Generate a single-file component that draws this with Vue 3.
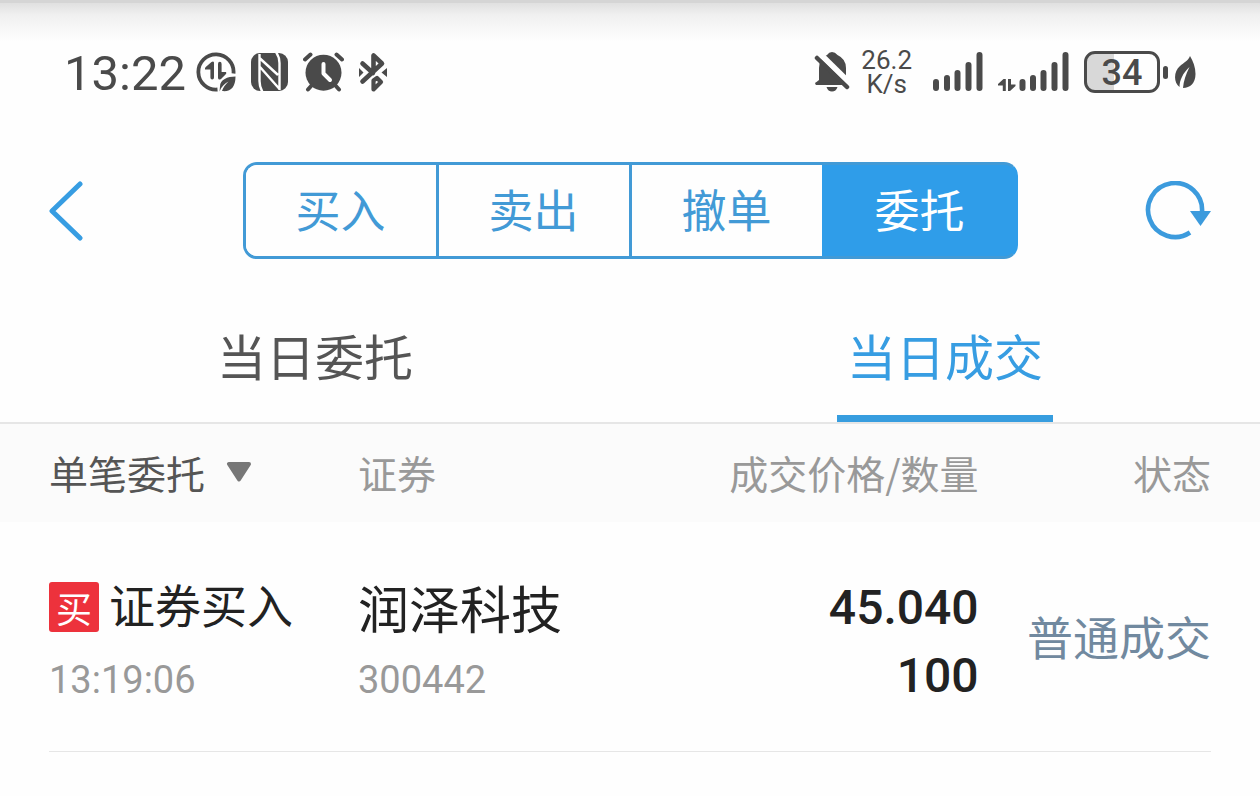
<script setup>
import { ref } from 'vue'

const actions = ['买入', '卖出', '撤单', '委托']
const activeAction = ref('委托')
const tabs = ['当日委托', '当日成交']
const activeTab = ref('当日成交')
const mode = ref('单笔委托')
const trades = [
  {
    badge: '买',
    action: '证券买入',
    time: '13:19:06',
    name: '润泽科技',
    code: '300442',
    price: '45.040',
    quantity: '100',
    status: '普通成交'
  }
]
</script>

<template>
  <div class="screen">
    <header class="status-bar">
      <div class="status-group">
        <span class="clock">13:22</span>
        <svg class="i-data" width="40" height="40" viewBox="0 0 40 40" aria-hidden="true">
          <path d="M37.5 21.500A17.600 17.600 0 1 0 21.500 37.500" fill="none" stroke="#4a4a4a" stroke-width="3.800" />
          <path d="M18 10.500V25.500Q18 27.500 16.200 27.500T14.400 25.500V17.500H9Q8.500 16 10 14.700L15.500 10Q17.500 8.800 18 10.500zM22 26V12Q22 9.800 23.800 9.800T25.600 12V20H30Q31 21 29.500 22.500L25 27Q22.500 28.500 22 26z" fill="#4a4a4a" />
          <path d="M39.500 24.500c-8 0-15.500 3-15.500 10l-.5 5c2-5 5-8 9-10-3 3-5.500 6-6.500 9.500 9 1 13.500-4 13.500-14.500z" fill="#4a4a4a" />
        </svg>
        <svg class="i-nfc" width="37" height="38" viewBox="0 0 37 38" aria-hidden="true">
          <rect width="37" height="38" rx="9" fill="#4a4a4a" />
          <path d="M8.500 1V28Q8.500 34 11.500 39M25 -1Q28.500 4 28.500 10V37M8.500 5L27 22M9 14L28.500 36" fill="none" stroke="#fff" stroke-width="2.400" />
        </svg>
        <svg class="i-alarm" width="41" height="40" viewBox="0 0 41 40" aria-hidden="true">
          <circle cx="20.500" cy="20.700" r="18" fill="#4a4a4a" />
          <path d="M2 7.500L7.500 2.500M33.500 2.500L39 7.500" stroke="#fff" stroke-width="7" stroke-linecap="round" />
          <path d="M2 7.500L7.500 2.500M33.500 2.500L39 7.500M9 33L5 37.500M32 33L36 37.500" stroke="#4a4a4a" stroke-width="4" stroke-linecap="round" />
          <path d="M20.500 12V21.500L27 28" fill="none" stroke="#fff" stroke-width="4" stroke-linecap="round" stroke-linejoin="round" />
        </svg>
        <svg class="i-bt" width="28" height="41" viewBox="0 0 28 41" aria-hidden="true">
          <path d="M3.500 11.500L14 21M3.500 29.500L23 11.500L14.500 3.500V19" fill="none" stroke="#4a4a4a" stroke-width="4.600" stroke-linecap="round" stroke-linejoin="round" />
          <path d="M14.500 28.500V37.500L22 30L18 26z" fill="none" stroke="#4a4a4a" stroke-width="4.200" stroke-linejoin="round" />
          <path d="M0 16L4.500 20.500L0 25zM28 16L22.500 20.500L28 25z" fill="#4a4a4a" />
        </svg>
      </div>
      <div class="status-group">
        <svg class="i-bell" width="36" height="41" viewBox="0 0 36 41" aria-hidden="true">
          <path d="M5 28V16Q5 6 13 3Q15 0 18 0Q21 0 23.500 3Q32 7 32 16V29L35 33H2Q0 31 2.500 30zM12.500 35H23.500Q22 39.500 18 39.500Q14 39.500 12.500 35z" fill="#4a4a4a" />
          <path d="M5 1L38 33.500" stroke="#fefefe" stroke-width="6" />
          <path d="M3 6L33 35" stroke="#4a4a4a" stroke-width="4.500" stroke-linecap="round" />
        </svg>
        <span class="speed"><span>26.2</span><span>K/s</span></span>
        <svg class="i-signal" width="50" height="40" viewBox="0 0 50 40" aria-hidden="true">
          <path d="M3 30V36M14 26V36M24.500 21V36M35.500 13V36M46.500 3V36" stroke="#4a4a4a" stroke-width="6" stroke-linecap="round" />
        </svg>
        <svg class="i-signal-data" width="71" height="40" viewBox="0 0 71 40" aria-hidden="true">
          <path d="M7.800 27V39H4.800V33.500H0V32L5.500 27zM10 39V27H13V32.500H17.500V34L12 39z" fill="#4a4a4a" />
          <path d="M24.500 30V36M35 26V36M45.500 21V36M56.500 13V36M67.500 3V36" stroke="#4a4a4a" stroke-width="6" stroke-linecap="round" />
        </svg>
        <span class="battery">34</span>
        <span class="battery-tip"></span>
        <svg class="i-leaf" width="21" height="33" viewBox="0 0 21 33" aria-hidden="true">
          <path d="M15 0C18 5 20.500 11 20.500 18C20.500 27 15 32 8 32C8.500 25 11 18 14.500 11C8 17 4.500 24 4.500 31C-2 26-1 15 5 10C9 6.500 13 5 15 0z" fill="#4a4a4a" />
        </svg>
      </div>
    </header>

    <nav class="toolbar" aria-label="交易">
      <button class="icon-button" type="button" aria-label="返回">
        <svg width="34" height="60" viewBox="0 0 34 60">
          <path d="M31 3L3 30L31 57" fill="none" stroke="#379de2" stroke-width="5" stroke-linecap="round" stroke-linejoin="round" />
        </svg>
      </button>
      <div class="segments">
        <button
          v-for="item in actions"
          :key="item"
          type="button"
          class="segment"
          :class="{ active: activeAction === item }"
          @click="activeAction = item"
        >{{ item }}</button>
      </div>
      <button class="icon-button refresh" type="button" aria-label="刷新">
        <svg width="66" height="60" viewBox="0 0 66 60">
          <path d="M45 51.500A27 27 0 1 1 57 31" fill="none" stroke="#3c9bdd" stroke-width="4.600" />
          <path d="M45 30H66L55.500 45z" fill="#3c9bdd" />
        </svg>
      </button>
    </nav>

    <div class="tabs" role="tablist">
      <button
        v-for="tab in tabs"
        :key="tab"
        type="button"
        role="tab"
        class="tab"
        :class="{ active: activeTab === tab }"
        :aria-selected="activeTab === tab"
        @click="activeTab = tab"
      ><span>{{ tab }}</span></button>
    </div>

    <main class="records">
      <table>
        <thead>
          <tr>
            <th class="col-type" scope="col">
              <span class="picker">
                <select v-model="mode" aria-label="委托类型">
                  <option>单笔委托</option>
                </select>
                <svg width="26" height="20" viewBox="0 0 26 20" aria-hidden="true">
                  <path d="M3 2H23L13 17.500z" fill="#777" stroke="#777" stroke-width="4" stroke-linejoin="round" />
                </svg>
              </span>
            </th>
            <th class="col-name" scope="col">证券</th>
            <th class="col-price" scope="col">成交价格/数量</th>
            <th class="col-status" scope="col">状态</th>
          </tr>
        </thead>
        <tbody>
          <tr v-for="trade in trades" :key="trade.time">
            <td>
              <div class="line primary"><span class="badge">{{ trade.badge }}</span><span class="action">{{ trade.action }}</span></div>
              <div class="line minor">{{ trade.time }}</div>
            </td>
            <td>
              <div class="line name">{{ trade.name }}</div>
              <div class="line minor">{{ trade.code }}</div>
            </td>
            <td class="col-price">
              <div class="line number">{{ trade.price }}</div>
              <div class="line number">{{ trade.quantity }}</div>
            </td>
            <td class="col-status state">{{ trade.status }}</td>
          </tr>
        </tbody>
      </table>
    </main>
  </div>
</template>

<style>
body {
  margin: 0;
  background: #fefefe;
}
</style>

<style scoped>
.screen {
  min-height: 100vh;
  box-sizing: border-box;
  border-top: 3px solid #d5d5d5;
  background: linear-gradient(#e0e0e0, #f0f0f0 12px, #fefefe 38px);
  font-family: "Noto Sans CJK SC", sans-serif;
  color: #222;
}
button,
select {
  margin: 0;
  padding: 0;
  border: 0;
  background: none;
  font: inherit;
  color: inherit;
  cursor: pointer;
}
svg {
  display: block;
  flex: none;
}
.status-bar {
  display: flex;
  justify-content: space-between;
  align-items: center;
  height: 138px;
  padding: 0 64px;
  color: #4a4a4a;
  font-family: Roboto, sans-serif;
}
.status-group {
  display: flex;
  align-items: center;
}
.clock {
  padding-top: 4px;
  font-size: 49px;
  line-height: 56px;
}
.i-data { margin-left: 10px; }
.i-nfc,
.i-alarm,
.i-bt { margin-left: 15px; }
.speed {
  display: flex;
  flex-direction: column;
  align-items: center;
  margin: 0 21px 0 11px;
  font-size: 26px;
  line-height: 24px;
}
.i-signal-data { margin-left: 15px; }
.battery {
  box-sizing: border-box;
  width: 76px;
  height: 42px;
  margin-left: 15px;
  border: 3px solid #4a4a4a;
  border-radius: 11px;
  background: linear-gradient(90deg, #d8d8d8 27px, transparent 27px);
  font-size: 36px;
  font-weight: 500;
  line-height: 38px;
  text-align: center;
}
.battery-tip {
  width: 5px;
  height: 13px;
  margin: 0 7px 0 3px;
  border-radius: 3px;
  background: #4a4a4a;
}
.toolbar {
  display: grid;
  grid-template-columns: 1fr minmax(0, 775px) 1fr;
  align-items: center;
  padding: 21px 49px 0;
}
.icon-button {
  justify-self: start;
}
.refresh {
  justify-self: end;
}
.segments {
  display: flex;
  box-sizing: border-box;
  height: 97px;
  border: 3px solid #429ad6;
  border-radius: 14px;
  background: linear-gradient(90deg, transparent 90%, #2f9de9 90%);
  overflow: hidden;
}
.segment {
  flex: 1;
  padding-bottom: 4px;
  background: #fefefe;
  color: #429ad6;
  font-size: 45px;
}
.segment + .segment {
  border-left: 3px solid #429ad6;
}
.segments .segment.active {
  border-color: #2f9de9;
  background: #2f9de9;
  color: #fff;
}
.segments:has(.segment:last-child.active) {
  border-right-color: #2f9de9;
}
.tabs {
  display: flex;
  margin-top: 31px;
  border-bottom: 2px solid #e6e6e6;
}
.tab {
  display: flex;
  flex: 1;
  justify-content: center;
  color: #555;
  font-size: 49px;
}
.tab span {
  box-sizing: border-box;
  width: 216px;
  height: 132px;
  border-bottom: 7px solid transparent;
  line-height: 130px;
}
.tab.active {
  color: #379de2;
}
.tab.active span {
  border-color: #379ddf;
}
.records {
  padding: 0 49px;
  background: linear-gradient(#fbfbfb, #fbfbfb) top / 100% 98px no-repeat;
}
table {
  width: 100%;
  border-collapse: collapse;
  table-layout: fixed;
}
th,
td {
  padding: 0;
  text-align: left;
  white-space: nowrap;
}
th {
  box-sizing: border-box;
  height: 98px;
  padding-bottom: 3px;
  color: #999;
  font-size: 39px;
  font-weight: 400;
}
.col-type { width: 309px; }
.col-name { width: 23%; }
.col-price { text-align: right; }
.col-status {
  width: 20%;
  text-align: right;
}
.picker {
  display: flex;
  align-items: center;
  color: #555;
}
.picker select {
  padding-right: 46px;
  appearance: none;
}
.picker svg {
  margin-left: -26px;
  pointer-events: none;
}
td {
  padding: 51px 0 33px;
  border-bottom: 1px solid #e6e6e6;
  vertical-align: top;
}
.line {
  display: flex;
  align-items: center;
  height: 68px;
}
.primary {
  gap: 10px;
  font-size: 46px;
}
.action {
  padding-bottom: 8px;
}
.badge {
  width: 50px;
  height: 50px;
  border-radius: 3px;
  background: #ed323c;
  color: #fff;
  font-size: 36px;
  line-height: 50px;
  text-align: center;
}
.name {
  font-size: 51px;
}
.minor {
  height: 77px;
  color: #999;
  font-family: Roboto, sans-serif;
  font-size: 38px;
}
.number {
  justify-content: flex-end;
  font-family: Roboto, sans-serif;
  font-size: 48px;
  font-weight: 500;
}
.state {
  padding-bottom: 54px;
  color: #71899f;
  font-size: 46px;
  vertical-align: middle;
}
</style>
